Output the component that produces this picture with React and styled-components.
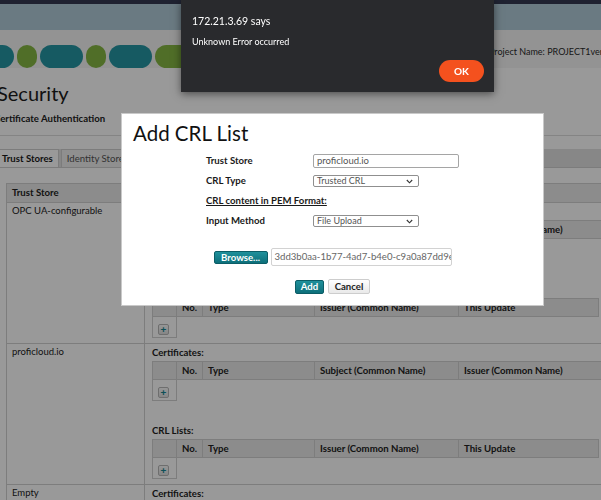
import React from 'react'
import styled, {createGlobalStyle} from 'styled-components'

const pills = [
  {tone: 'teal', w: 44, first: true},
  {tone: 'green', w: 20},
  {tone: 'teal', w: 43},
  {tone: 'green', w: 20},
  {tone: 'teal', w: 43},
  {tone: 'green', w: 62},
  {tone: 'teal', w: 43},
  {tone: 'green', w: 20},
  {tone: 'teal', w: 43},
]

const certColumns = [
  {label: '', w: 23},
  {label: 'No.', w: 26},
  {label: 'Type', w: 112},
  {label: 'Subject (Common Name)', w: 144},
  {label: 'Issuer (Common Name)', w: 144},
  {label: 'Valid To'},
]

const crlColumns = [
  {label: '', w: 23},
  {label: 'No.', w: 26},
  {label: 'Type', w: 112},
  {label: 'Issuer (Common Name)', w: 144},
  {label: 'This Update'},
]

const stores = ['OPC UA-configurable', 'proficloud.io', 'Empty']

const GlobalStyle = createGlobalStyle`
  html, body {
    margin: 0;
    padding: 0;
    overflow: hidden;
    background: #fff;
  }
  body {
    font-family: Lato, 'Liberation Sans', sans-serif;
    font-size: 9.5px;
    color: #222;
  }
  * {
    box-sizing: border-box;
  }
`

function SectionTable({label, columns, wide, first}) {
  return (
    <Section $first={first}>
      <SectionLabel>{label}</SectionLabel>
      <Grid $wide={wide}>
        <GridHead>
          {columns.map((c, i) => (
            <HeadCell key={i} $w={c.w} $first={i === 0}>
              {c.label}
            </HeadCell>
          ))}
        </GridHead>
        <AddCell>
          <PlusButton>+</PlusButton>
        </AddCell>
      </Grid>
    </Section>
  )
}

function Chevron() {
  return (
    <svg width="7" height="5" viewBox="0 0 7 5">
      <path d="M0.8 1 L3.5 3.8 L6.2 1" fill="none" stroke="#333" strokeWidth="1.1" />
    </svg>
  )
}

export default function App() {
  return (
    <>
      <GlobalStyle />
      <Page>
        <TopStrip />
        <TopBar />
        <HeaderBand>
          <Pills>
            {pills.map((p, i) => (
              <Pill key={i} $tone={p.tone} $w={p.w} $first={p.first} />
            ))}
          </Pills>
          <ProjectName>Project Name: PROJECT1version2</ProjectName>
        </HeaderBand>
        <PageTitle>Security</PageTitle>
        <SubTitle>Certificate Authentication</SubTitle>
        <Rule />
        <TabBar>
          <Tab $active>Trust Stores</Tab>
          <Tab>Identity Stores</Tab>
        </TabBar>
        <TabPanel>
          <StoreTable>
            <StoreRow $head>
              <NameCell $head>Trust Store</NameCell>
              <ContentCell $head>Content</ContentCell>
            </StoreRow>
            {stores.map(name => (
              <StoreRow key={name}>
                <NameCell>{name}</NameCell>
                <ContentCell>
                  <SectionTable label="Certificates:" columns={certColumns} wide first />
                  <SectionTable label="CRL Lists:" columns={crlColumns} />
                </ContentCell>
              </StoreRow>
            ))}
          </StoreTable>
        </TabPanel>
      </Page>

      <Overlay />

      <Dialog>
        <DialogTitle>Add CRL List</DialogTitle>
        <Form>
          <FormRow>
            <FormLabel>Trust Store</FormLabel>
            <TextBox>proficloud.io</TextBox>
          </FormRow>
          <FormRow>
            <FormLabel>CRL Type</FormLabel>
            <SelectBox>
              <SelectText>Trusted CRL</SelectText>
              <Chevron />
            </SelectBox>
          </FormRow>
          <FormRow>
            <FormLabel $underline $span>CRL content in PEM Format:</FormLabel>
          </FormRow>
          <FormRow>
            <FormLabel>Input Method</FormLabel>
            <SelectBox>
              <SelectText>File Upload</SelectText>
              <Chevron />
            </SelectBox>
          </FormRow>
        </Form>
        <UploadRow>
          <ActionButton $w={54} $h={13}>Browse...</ActionButton>
          <FileName>3dd3b0aa-1b77-4ad7-b4e0-c9a0a87dd9e1.crl</FileName>
        </UploadRow>
        <ButtonRow>
          <ActionButton $w={29} $h={14}>Add</ActionButton>
          <ActionButton $w={42} $h={15} $plain>Cancel</ActionButton>
        </ButtonRow>
      </Dialog>

      <Alert>
        <AlertTitle>172.21.3.69 says</AlertTitle>
        <AlertMessage>Unknown Error occurred</AlertMessage>
        <AlertFooter>
          <OkButton>OK</OkButton>
        </AlertFooter>
      </Alert>
    </>
  )
}

const Page = styled.div`
  width: 760px;
`

const TopStrip = styled.div`
  height: 4px;
  background: #343a53;
`

const TopBar = styled.div`
  height: 26px;
  background: #b1cbd9;
`

const HeaderBand = styled.div`
  height: 38px;
  display: flex;
  align-items: flex-end;
  background: #f5f5f5;
  overflow: hidden;
`

const Pills = styled.div`
  flex: 0 0 489px;
  display: flex;
  gap: 3px;
  height: 23px;
  overflow: hidden;
`

const Pill = styled.div`
  flex: 0 0 ${p => p.$w}px;
  height: 23px;
  border-radius: 12px;
  margin-left: ${p => (p.$first ? '-30px' : '0')};
  background: ${p => (p.$tone === 'teal' ? '#2596a3' : '#85b743')};
`

const ProjectName = styled.div`
  white-space: nowrap;
  line-height: 12px;
  margin-bottom: 10px;
  color: #2a2a2a;
  font-size: 9px;
`

const PageTitle = styled.h1`
  margin: 13px 0 0 -3px;
  font-size: 20px;
  line-height: 24px;
  font-weight: 400;
  color: #1c1c1c;
`

const SubTitle = styled.div`
  margin: 8px 0 0 -6px;
  font-weight: 700;
  line-height: 12px;
  font-size: 9.6px;
`

const Rule = styled.div`
  margin-top: 10px;
  height: 1px;
  background: #dcdcdc;
`

const TabBar = styled.div`
  display: flex;
  align-items: flex-end;
  gap: 2px;
  height: 32px;
  padding-top: 13px;
  border-bottom: 1px solid #cfcfcf;
  background: linear-gradient(to bottom, transparent 13px, #e2e2e2 13px);
`

const Tab = styled.div`
  height: 18px;
  line-height: 17px;
  padding: ${p => (p.$active ? '0 5px 0 6px' : '0 6px 0 5px')};
  margin-left: ${p => (p.$active ? '-5px' : '0')};
  border: 1px solid #cfcfcf;
  border-bottom: none;
  background: ${p => (p.$active ? '#fff' : '#efefef')};
  font-weight: ${p => (p.$active ? 700 : 400)};
  font-size: 9.6px;
  color: ${p => (p.$active ? '#1a1a1a' : '#555')};
`

const TabPanel = styled.div`
  padding: 15px 0 0 6px;
`

const StoreTable = styled.div`
  border-top: 1px solid #d0d0d0;
  border-left: 1px solid #d0d0d0;
`

const StoreRow = styled.div`
  display: flex;
  border-bottom: 1px solid #d0d0d0;
  height: ${p => (p.$head ? '19px' : 'auto')};
  background: ${p => (p.$head ? '#e9e9e9' : '#fff')};
`

const NameCell = styled.div`
  flex: 0 0 137px;
  padding: ${p => (p.$head ? '3px 5px 0' : '2px 5px 0')};
  line-height: 12px;
  font-weight: ${p => (p.$head ? 700 : 400)};
  font-size: ${p => (p.$head ? '9.6px' : '9.5px')};
`

const ContentCell = styled.div`
  flex: 1;
  border-left: 1px solid #d0d0d0;
  padding: ${p => (p.$head ? '3px 7px 0' : '3px 7px 5px')};
  line-height: 12px;
  font-weight: ${p => (p.$head ? 700 : 400)};
`

const Section = styled.div`
  margin-top: ${p => (p.$first ? '0' : '24px')};
`

const SectionLabel = styled.div`
  font-weight: 700;
  font-size: 9.6px;
  line-height: 12px;
  margin-bottom: 2px;
`

const Grid = styled.div`
  width: ${p => (p.$wide ? '600px' : '447px')};
`

const GridHead = styled.div`
  display: flex;
  height: 19px;
  border: 1px solid #d0d0d0;
  background: #e9e9e9;
`

const HeadCell = styled.div`
  flex: ${p => (p.$w ? `0 0 ${p.$w}px` : '1')};
  border-left: ${p => (p.$first ? 'none' : '1px solid #d0d0d0')};
  padding-left: 5px;
  line-height: 17px;
  font-weight: 700;
  font-size: 9.6px;
  white-space: nowrap;
`

const AddCell = styled.div`
  width: 25px;
  height: 21px;
  border: 1px solid #d0d0d0;
  border-top: none;
  padding: 7px 0 0 5px;
`

const PlusButton = styled.div`
  width: 11px;
  height: 11px;
  border: 1px solid #b8b8b8;
  border-radius: 2px;
  background: linear-gradient(#fbfbfb, #e0e0e0);
  color: #178592;
  font-weight: 900;
  font-size: 10px;
  line-height: 9px;
  text-align: center;
`

const Overlay = styled.div`
  position: fixed;
  inset: 0;
  background: rgba(0, 0, 0, 0.4);
  z-index: 10;
`

const Dialog = styled.div`
  position: fixed;
  left: 121px;
  top: 113px;
  width: 423px;
  height: 193px;
  background: #fff;
  border: 1px solid #c9c9c9;
  z-index: 20;
  padding-top: 6px;
`

const DialogTitle = styled.div`
  padding-left: 11px;
  font-size: 20.5px;
  line-height: 26px;
  color: #111;
`

const Form = styled.div`
  width: 253px;
  margin: 5px auto 0;
`

const FormRow = styled.div`
  display: flex;
  align-items: center;
  height: 20px;
`

const FormLabel = styled.div`
  flex: ${p => (p.$span ? '1' : '0 0 107px')};
  font-weight: 700;
  font-size: 9.6px;
  line-height: 12px;
  color: #1a1a1a;
  text-decoration: ${p => (p.$underline ? 'underline' : 'none')};
`

const TextBox = styled.div`
  width: 146px;
  height: 14px;
  border: 1px solid #a5a5a5;
  border-radius: 2px;
  padding: 0 3px;
  line-height: 12px;
  color: #555;
`

const SelectBox = styled.div`
  width: 106px;
  height: 12px;
  display: flex;
  align-items: center;
  justify-content: space-between;
  border: 1px solid #8f8f8f;
  border-radius: 2px;
  padding: 0 5px 0 3px;
  overflow: hidden;
`

const SelectText = styled.span`
  font-size: 9px;
  line-height: 10px;
  color: #555;
`

const UploadRow = styled.div`
  display: flex;
  align-items: center;
  justify-content: center;
  gap: 3px;
  margin-top: 17px;
  height: 18px;
`

const ActionButton = styled.div`
  width: ${p => p.$w}px;
  height: ${p => p.$h}px;
  display: flex;
  align-items: center;
  justify-content: center;
  border-radius: 2px;
  font-weight: 700;
  font-size: 9.6px;
  border: 1px solid ${p => (p.$plain ? '#cdcdcd' : '#0b5d66')};
  background: ${p => (p.$plain ? 'linear-gradient(#ffffff, #e9e9e9)' : 'linear-gradient(#1f909b, #0d6f7a)')};
  color: ${p => (p.$plain ? '#222' : '#fff')};
`

const FileName = styled.div`
  width: 181px;
  height: 18px;
  border: 1px solid #d2d2d2;
  border-radius: 2px;
  padding-left: 3px;
  line-height: 16px;
  color: #666;
  font-size: 9.6px;
  white-space: nowrap;
  overflow: hidden;
`

const ButtonRow = styled.div`
  display: flex;
  align-items: center;
  justify-content: center;
  gap: 4px;
  margin-top: 13px;
`

const Alert = styled.div`
  position: fixed;
  left: 181px;
  top: 0;
  width: 313px;
  height: 92px;
  z-index: 30;
  display: flex;
  flex-direction: column;
  padding: 14px 10px 10px 11px;
  background: #292a2d;
  box-shadow: 0 2px 8px rgba(0, 0, 0, 0.5);
  color: #fff;
`

const AlertTitle = styled.div`
  font-size: 10.5px;
  line-height: 14px;
`

const AlertMessage = styled.div`
  margin-top: 8px;
  font-size: 9px;
  line-height: 12px;
`

const AlertFooter = styled.div`
  margin-top: auto;
  display: flex;
  justify-content: flex-end;
`

const OkButton = styled.div`
  width: 45px;
  height: 22px;
  border-radius: 11px;
  background: #f4511e;
  color: #fff;
  font-weight: 700;
  font-size: 10px;
  line-height: 22px;
  text-align: center;
`
